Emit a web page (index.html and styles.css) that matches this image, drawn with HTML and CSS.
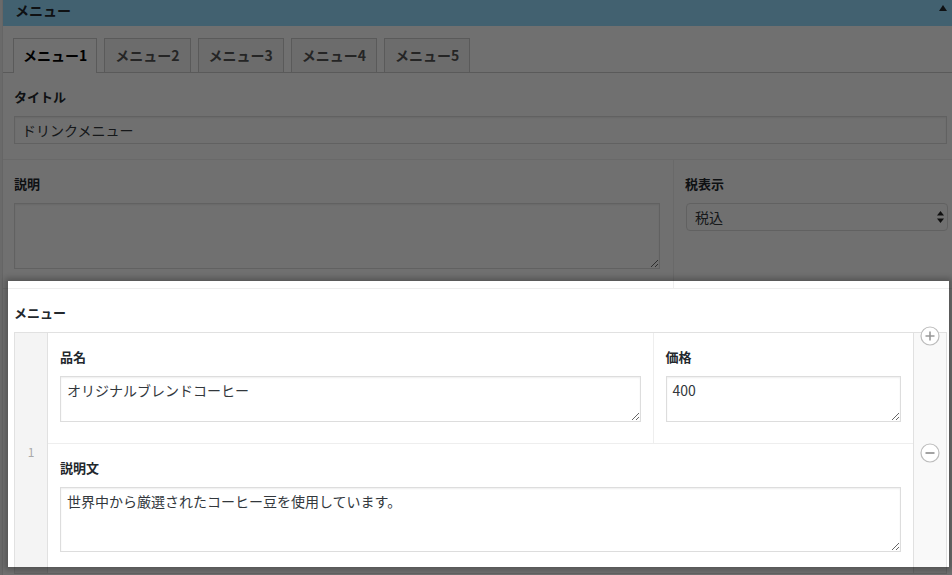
FILE: index.html
```html
<!DOCTYPE html>
<html lang="ja">
<head>
  <meta charset="UTF-8">
  <title>メニュー</title>
  <link rel="stylesheet" href="styles.css">
</head>
<body>
  <div class="postbox">
    <h2 class="hndle">
      <span>メニュー</span>
      <span class="toggle"></span>
    </h2>

    <div class="inside">
      <!-- Tabs -->
      <ul class="tabs">
        <li class="tab active">メニュー1</li>
        <li class="tab">メニュー2</li>
        <li class="tab">メニュー3</li>
        <li class="tab">メニュー4</li>
        <li class="tab">メニュー5</li>
      </ul>

      <!-- Title -->
      <div class="field">
        <label class="field-label">タイトル</label>
        <input class="text-input" type="text" value="ドリンクメニュー">
      </div>

      <!-- Description + tax -->
      <div class="field-row">
        <div class="field field-desc">
          <label class="field-label">説明</label>
          <textarea class="area area-desc"></textarea>
        </div>
        <div class="field field-tax">
          <label class="field-label">税表示</label>
          <div class="select-wrap">
            <select class="select">
              <option>税込</option>
              <option>税抜</option>
            </select>
            <svg class="select-arrows" width="7" height="12" viewBox="0 0 7 12">
              <path d="M3.5 0 L7 4.5 L0 4.5 Z" fill="#222"/>
              <path d="M3.5 12 L7 7.5 L0 7.5 Z" fill="#222"/>
            </svg>
          </div>
        </div>
      </div>

      <!-- Repeater -->
      <div class="field field-repeater">
        <label class="field-label">メニュー</label>
        <div class="repeater">
          <div class="order">1</div>

          <div class="row-fields">
            <div class="cell cell-name">
              <label class="field-label">品名</label>
              <textarea class="area area-short">オリジナルブレンドコーヒー</textarea>
            </div>
            <div class="cell cell-price">
              <label class="field-label">価格</label>
              <textarea class="area area-short">400</textarea>
            </div>
            <div class="cell cell-text">
              <label class="field-label">説明文</label>
              <textarea class="area area-long">世界中から厳選されたコーヒー豆を使用しています。</textarea>
            </div>
          </div>

          <div class="remove">
            <svg class="row-icon row-add" width="20" height="20" viewBox="0 0 20 20">
              <circle cx="10" cy="10" r="9" fill="#fff" stroke="#bdbdbd" stroke-width="1.2"/>
              <path d="M10 5.5 V14.5 M5.5 10 H14.5" stroke="#999" stroke-width="1.6"/>
            </svg>
            <svg class="row-icon" width="20" height="20" viewBox="0 0 20 20">
              <circle cx="10" cy="10" r="9" fill="#fff" stroke="#bdbdbd" stroke-width="1.2"/>
              <path d="M5.5 10 H14.5" stroke="#999" stroke-width="1.8"/>
            </svg>
          </div>
        </div>
      </div>
    </div>
  </div>

  <!-- Spotlight over the repeater field -->
  <div class="spotlight"></div>
</body>
</html>
```

FILE: styles.css
```css
/* ===============================
   BASE
=============================== */
html, body {
  margin: 0;
  padding: 0;
  overflow: hidden;
}
body {
  position: relative;
  height: 575px;
  background: #f1f1f1;
  font-family: "Noto Sans CJK JP", "Noto Sans", sans-serif;
  font-size: 13px;
  color: #23282d;
}

/* ===============================
   POSTBOX
=============================== */
.postbox {
  margin-left: 2px;
  width: 956px;
  background: #fff;
  border-left: 1px solid #e5e5e5;
  min-height: 600px;
}
.hndle {
  margin: 0;
  height: 26px;
  padding: 0 12px 0 12px;
  display: flex;
  justify-content: space-between;
  align-items: flex-start;
  background: #96dcff;
  font-size: 14px;
  font-weight: bold;
  line-height: 20px;
}
.toggle {
  margin-top: 5px;
  width: 0;
  height: 0;
  border-left: 4px solid transparent;
  border-right: 4px solid transparent;
  border-bottom: 6px solid #23282d;
}

/* Tabs */
.tabs {
  list-style: none;
  margin: 0;
  padding: 12px 0 0 10px;
  display: flex;
  align-items: flex-start;
  gap: 7px;
  border-bottom: 1px solid #ccc;
}
.tab {
  box-sizing: border-box;
  height: 34px;
  padding: 0 10px;
  border: 1px solid #ccc;
  border-bottom: 0;
  background: #f5f5f5;
  font-size: 14px;
  font-weight: bold;
  line-height: 33px;
  color: #555;
}
.tab.active {
  height: 35px;
  margin-bottom: -1px;
  padding: 0 9px;
  background: #fff;
  color: #000;
}

/* ===============================
   FIELDS
=============================== */
.field {
  padding: 15px 12px 15px 11px;
}
.field-label {
  display: block;
  margin-bottom: 10px;
  font-size: 13px;
  font-weight: bold;
  line-height: 18px;
  color: #23282d;
}
.text-input {
  display: block;
  box-sizing: border-box;
  width: 100%;
  height: 28px;
  margin: 0;
  padding: 0 7px;
  border: 1px solid #ddd;
  box-shadow: inset 0 1px 2px rgba(0, 0, 0, 0.07);
  font-family: inherit;
  font-size: 14px;
  color: #32373c;
  background: #fff;
}
.area {
  display: block;
  box-sizing: border-box;
  width: 100%;
  margin: 0;
  padding: 3px 6px 4px;
  border: 1px solid #ddd;
  box-shadow: inset 0 1px 2px rgba(0, 0, 0, 0.07);
  font-family: inherit;
  font-size: 14px;
  line-height: 20px;
  color: #32373c;
  background: #fff;
  resize: vertical;
}
.area-desc { height: 66px; }
.area-short { height: 46px; }
.area-long { height: 65px; }

.field-row {
  display: flex;
  border-top: 1px solid #eee;
}
.field-desc {
  box-sizing: border-box;
  width: 670px;
  padding: 15px 13px 19px 11px;
}
.field-tax {
  flex: 1;
  border-left: 1px solid #eee;
}
.select-wrap {
  position: relative;
}
.select {
  display: block;
  box-sizing: border-box;
  width: 100%;
  height: 28px;
  margin: 0 0 0 1px;
  padding: 0 8px;
  border: 1px solid #ddd;
  border-radius: 4px;
  background: #fff;
  -webkit-appearance: none;
  appearance: none;
  font-family: inherit;
  font-size: 14px;
  color: #32373c;
}
.select-arrows {
  position: absolute;
  right: 3px;
  top: 8px;
}

/* ===============================
   REPEATER
=============================== */
.field-repeater {
  border-top: 1px solid #eee;
}
.repeater {
  display: flex;
  border: 1px solid #e1e1e1;
}
.order {
  width: 32px;
  border-right: 1px solid #e1e1e1;
  background: #f4f4f4;
  display: flex;
  align-items: center;
  justify-content: center;
  padding-bottom: 3px;
  font-size: 12px;
  color: #aaa;
}
.row-fields {
  flex: 1;
  display: flex;
  flex-wrap: wrap;
}
.cell {
  box-sizing: border-box;
  padding: 15px 12px 21px 12px;
}
.cell-name {
  width: 70%;
  border-right: 1px solid #eee;
}
.cell-price {
  width: 30%;
  padding-right: 12px;
}
.cell-text {
  width: 100%;
  border-top: 1px solid #eee;
}
.remove {
  position: relative;
  width: 32px;
  border-left: 1px solid #e1e1e1;
  background: #f9f9f9;
  display: flex;
  align-items: center;
  justify-content: center;
}
.row-icon {
  display: block;
}
.row-add {
  position: absolute;
  top: -7px;
  left: 6px;
}

/* ===============================
   SPOTLIGHT OVERLAY
=============================== */
.spotlight {
  position: absolute;
  left: 8px;
  top: 281px;
  width: 941px;
  height: 286px;
  pointer-events: none;
  box-shadow: 0 0 0 2000px rgba(0, 0, 0, 0.56), 0 0 6px 3px rgba(0, 0, 0, 0.25);
}
```
